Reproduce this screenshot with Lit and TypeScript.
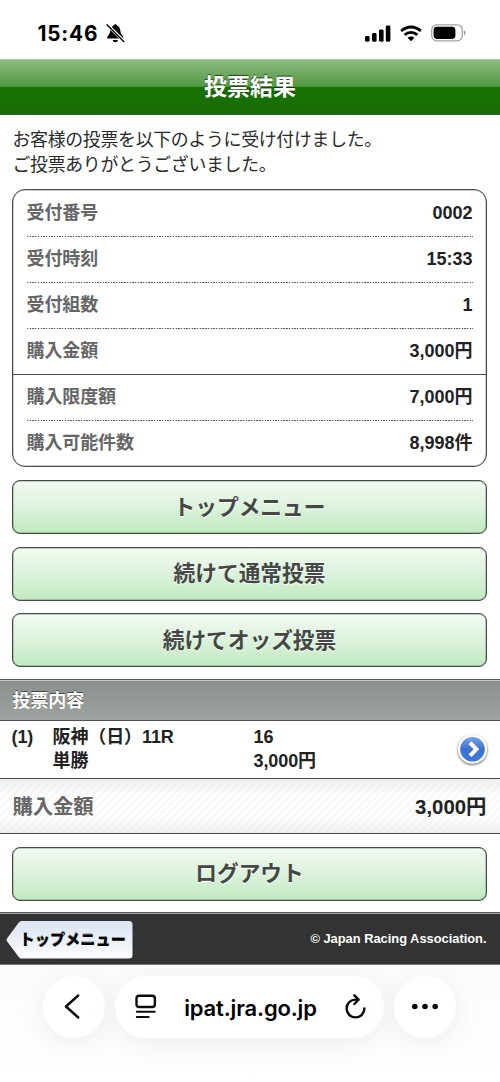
import { LitElement, html, css } from "lit";
import { customElement, property } from "lit/decorators.js";

const textFont = css`"Liberation Sans", "Noto Sans CJK JP", sans-serif`;

@customElement("status-bar")
class StatusBar extends LitElement {
  static styles = css`
    :host { display: flex; height: 59px; box-sizing: border-box; padding: 7px 34px 0 37.5px; align-items: center; background: #fff; color: #000; }
    .time { font: 700 20.8px/24px Inter, sans-serif; letter-spacing: 0.8px; width: 62.5px; padding-top: 1px; white-space: nowrap; }
    .bell { margin-left: 6px; }
    .signal { margin-left: auto; }
    .wifi { margin-left: 9px; }
    .battery { margin-left: 9px; }
    svg { display: block; flex: none; }
  `;
  render() {
    return html`
      <span class="time">15:46</span>
      <svg class="bell" width="19" height="20" viewBox="0 0 19 20">
        <path d="M9.3 1.2C8 1.2 7.6 2 7.4 2.8C4.8 3.7 4.3 5.8 4.2 8.3C4 11.3 2 11.9 1.2 14.2C1 15.1 1.5 15.6 2.3 15.6H16.3C17.2 15.6 17.7 15 17.3 14C16.6 12 14.7 11.3 14.4 8.2C14.3 5.8 13.7 3.7 11.2 2.8C11 2 10.6 1.2 9.3 1.2ZM6.7 17H12C11.6 18.5 10.6 19.2 9.3 19.2C8 19.2 7 18.5 6.7 17Z" fill="#000" />
        <path d="M1.2 1.6L17.9 18.2" stroke="#fff" stroke-width="3.2" />
        <path d="M1 1.8L17.7 18.4" stroke="#000" stroke-width="1.4" stroke-linecap="round" />
      </svg>
      <svg class="signal" width="26" height="17" viewBox="0 0 26 17">
        <rect x="0" y="11" width="4.6" height="5.7" rx="1.4" />
        <rect x="7" y="8.1" width="4.6" height="8.6" rx="1.4" />
        <rect x="14" y="4.6" width="4.6" height="12.1" rx="1.4" />
        <rect x="20.8" y="0.6" width="4.6" height="16.1" rx="1.4" />
      </svg>
      <svg class="wifi" width="22" height="17" viewBox="0 0 22 17" fill="none" stroke="#000" stroke-width="2.8">
        <path d="M1.2 6.1C6.7.6 15.3.6 20.8 6.1" />
        <path d="M4.7 9.9C8.3 6.6 13.7 6.6 17.3 9.9" />
        <path d="M7.6 12.8C9.5 11.1 12.5 11.1 14.4 12.8L11 16.3Z" fill="#000" stroke="none" />
      </svg>
      <svg class="battery" width="35" height="18" viewBox="0 0 35 18">
        <rect x=".7" y=".8" width="30.6" height="16" rx="5" fill="none" stroke="#a3a3a3" stroke-width="1.3" />
        <rect x="2.6" y="2.7" width="21.8" height="12.2" rx="3.3" />
        <path d="M32.8 6.2C35.4 7.2 35.4 10.4 32.8 11.4Z" fill="#a3a3a3" />
      </svg>
    `;
  }
}

@customElement("menu-button")
class MenuButton extends LitElement {
  @property() label = "";
  static styles = css`
    :host { display: block; }
    .button {
      display: flex; width: 100%; height: 54px; box-sizing: border-box; padding: 1px 0 0;
      align-items: center; justify-content: center;
      border: 1px solid #454b47; border-radius: 8px;
      background: linear-gradient(#f3faf2, #dff3df 45%, #c0eabf);
      box-shadow: inset 0 0 0 .5px rgba(70, 78, 72, .55);
      color: #444844; font: 700 21.7px/32px ${textFont}; text-shadow: 0 1px 0 #fff;
    }
  `;
  render() {
    return html`<button class="button">${this.label}</button>`;
  }
}

@customElement("browser-bar")
class BrowserBar extends LitElement {
  static styles = css`
    :host {
      display: flex; height: 117px; box-sizing: border-box; padding: 11px 43px 0; gap: 10px;
      align-items: flex-start; background: linear-gradient(#fbfbfb, #fff); overflow: hidden;
    }
    .round, .address {
      display: flex; height: 62px; box-sizing: border-box; border-radius: 31px; align-items: center; justify-content: center;
      padding-top: 1px; background: #fff; box-shadow: 0 6px 30px rgba(0, 0, 0, .065);
    }
    .round { width: 62px; flex: none; }
    .address { width: 269px; padding: 1px 17px 0 20px; justify-content: space-between; flex: none; }
    .host { font: 600 22px/28px Inter, sans-serif; color: #000; letter-spacing: -.15px; padding-top: 1px; white-space: nowrap; }
    svg { display: block; fill: none; stroke: #0b0b0b; stroke-linecap: round; stroke-linejoin: round; stroke-width: 2.4; }
    .back { margin-right: 4px; }
    .dots { fill: #0b0b0b; stroke: none; }
  `;
  render() {
    return html`
      <div class="round">
        <svg class="back" width="16" height="26" viewBox="0 0 16 26"><path d="M14.2 1.5L2 12.5L14.2 23.5" /></svg>
      </div>
      <div class="address">
        <svg width="22" height="26" viewBox="0 0 22 26">
          <rect x="1.5" y="1.7" width="18.4" height="11.3" rx="2.8" />
          <path d="M1.8 17.8H19.7M1.8 23.1H13.7" stroke-width="2" />
        </svg>
        <span class="host">ipat.jra.go.jp</span>
        <svg width="23" height="27" viewBox="0 0 23 27">
          <path d="M13.4 5.6H11.5A8.9 8.9 0 1 0 20.4 14.5M10.4 1.4L14.6 5.7L10.4 10" />
        </svg>
      </div>
      <div class="round">
        <svg class="dots" width="28" height="8" viewBox="0 0 28 8">
          <circle cx="3.8" cy="3.5" r="2.8" /><circle cx="14" cy="3.5" r="2.8" /><circle cx="24.2" cy="3.5" r="2.8" />
        </svg>
      </div>
    `;
  }
}

interface Row { label: string; value: string; line: string; }

const rows: Row[] = [
  { label: "受付番号", value: "0002", line: "dotted" },
  { label: "受付時刻", value: "15:33", line: "dotted" },
  { label: "受付組数", value: "1", line: "dotted" },
  { label: "購入金額", value: "3,000円", line: "solid" },
  { label: "購入限度額", value: "7,000円", line: "dotted" },
  { label: "購入可能件数", value: "8,998件", line: "last" },
];

@customElement("app-root")
class AppRoot extends LitElement {
  static styles = css`
    :host { display: block; width: 500px; height: 1082px; overflow: hidden; background: #fff; color: #222; font-family: ${textFont}; }
    .title {
      display: flex; height: 56px; box-sizing: border-box; padding-bottom: 1px;
      align-items: center; justify-content: center; margin: 0;
      border-top: 1px solid #a5c99d; border-bottom: 1px solid #3b5e38;
      background: linear-gradient(#8dbd83, #4f963f 50%, #187200 50%, #186d07);
      color: #fff; font-size: 23px; line-height: 34px; font-weight: 700; text-shadow: 0 -1px 1px rgba(0, 0, 0, .6);
    }
    .message { height: 50px; margin: 0; padding: 13px 12px 0 12.5px; font-size: 17.9px; line-height: 24.5px; letter-spacing: -.3px; color: #2a2a2a; }
    .card { height: 278px; box-sizing: border-box; margin: 11px 13px 0 12px; padding-top: 1px; border: 1px solid #484848; border-radius: 13px; background: #fff; box-shadow: inset 0 0 0 .5px rgba(80, 80, 80, .55); }
    .row {
      display: flex; height: 46px; box-sizing: border-box; margin: 0 13.5px; padding-bottom: 1px; align-items: center; justify-content: space-between;
      font-size: 18px; line-height: 27px; font-weight: 700;
    }
    .dotted { background: repeating-linear-gradient(90deg, #5c5c5c 0 1.35px, #d9d9d9 1.35px 2.7px) bottom / 100% 1px no-repeat; }
    .solid { margin: 0; padding: 0 13.5px; border-bottom: 1px solid #484848; }
    .last { height: 45px; padding-bottom: 0; }
    .label { color: #666; letter-spacing: -.1px; }
    .value { color: #222; }
    .buttons { display: grid; gap: 12.7px; padding: 13px 13px 0 12px; }
    .section {
      height: 42px; box-sizing: border-box; margin: 11.6px 0 0; padding: 8px 12.5px 0;
      border-top: 1px solid #565656; border-bottom: 1px solid #505050; box-shadow: inset 0 1px 0 #c6cbc8;
      background: linear-gradient(#89918d, #9da39f); color: #fff; font-size: 18px; line-height: 26px; font-weight: 700; letter-spacing: -.1px;
      text-shadow: 0 -1px 0 rgba(0, 0, 0, .5);
    }
    .bet {
      display: grid; grid-template-columns: 41px 201px 1fr 36px; height: 58px; box-sizing: border-box; padding: 4px 9px 0 11.5px;
      border-bottom: 1px solid #484848; font-size: 18px; line-height: 24.5px; font-weight: 700; letter-spacing: -.1px; color: #222;
    }
    .line { display: block; white-space: nowrap; }
    .arrow { display: block; margin-top: 5px; }
    .total {
      display: flex; height: 55px; box-sizing: border-box; padding: 2px 13.5px 0 12.5px; align-items: center; justify-content: space-between;
      border-bottom: 1px solid #484848;
      background: linear-gradient(rgba(228,228,228,.6), transparent 28% 72%, rgba(228,228,228,.6)),
        repeating-linear-gradient(135deg, #fefefe 0 2.8px, #f8f8f8 2.8px 5.6px);
      font-size: 20.4px; line-height: 30px; font-weight: 700;
    }
    .logout { padding: 13px 13px 11px 12px; }
    .footer {
      display: flex; height: 53px; box-sizing: border-box; padding: 2px 13.5px 0 6px; align-items: center; justify-content: space-between;
      border-top: 1px solid #53575a; border-bottom: 1px solid #777; box-shadow: inset 0 1px 0 #a0a4a7; background: #333;
    }
    .tag { display: grid; width: 127px; height: 38px; margin-top: 1px; }
    .tag-shape, .tag-text { grid-area: 1 / 1; }
    .tag-text { padding-left: 13.5px; font: 900 15.2px/38px ${textFont}; color: #000; white-space: nowrap; text-shadow: 0 -1px 0 #8a929a; }
    .copyright { color: #fff; font-size: 12.9px; line-height: 18px; font-weight: 700; letter-spacing: -.02px; }
  `;
  render() {
    return html`
      <status-bar></status-bar>
      <h1 class="title">投票結果</h1>
      <p class="message">お客様の投票を以下のように受け付けました。<br />ご投票ありがとうございました。</p>
      <div class="card">
        ${rows.map((r) => html`<div class="row ${r.line}"><span class="label">${r.label}</span><span class="value">${r.value}</span></div>`)}
      </div>
      <div class="buttons">
        <menu-button label="トップメニュー"></menu-button>
        <menu-button label="続けて通常投票"></menu-button>
        <menu-button label="続けてオッズ投票"></menu-button>
      </div>
      <div class="section">投票内容</div>
      <div class="bet">
        <span>(1)</span>
        <span><span class="line">阪神（日）11R</span><span class="line">単勝</span></span>
        <span><span class="line">16</span><span class="line">3,000円</span></span>
        <svg class="arrow" width="36" height="38" viewBox="0 0 36 38">
          <defs>
            <linearGradient id="blue" x2="0" y2="1"><stop stop-color="#7ba4e4" /><stop offset=".5" stop-color="#3b71d1" /><stop offset="1" stop-color="#3f79e0" /></linearGradient>
            <filter id="soft" x="-20%" y="-20%" width="140%" height="140%"><feGaussianBlur stdDeviation="1" /></filter>
          </defs>
          <circle cx="17.5" cy="20.3" r="14.8" fill="#777" filter="url(#soft)" />
          <circle cx="17.5" cy="19.2" r="14.6" fill="#fff" />
          <circle cx="17.5" cy="19.2" r="12.3" fill="url(#blue)" />
          <path d="M15 12.8L21.5 19.2L15 25.6" fill="none" stroke="#fff" stroke-width="4" />
        </svg>
      </div>
      <div class="total"><span class="label">購入金額</span><span class="value">3,000円</span></div>
      <div class="logout"><menu-button label="ログアウト"></menu-button></div>
      <div class="footer">
        <div class="tag">
          <svg class="tag-shape" width="127" height="38" viewBox="0 0 127 38">
            <defs><linearGradient id="pale" x2="0" y2="1"><stop stop-color="#dbe4f1" /><stop offset="1" stop-color="#fbfcfe" /></linearGradient></defs>
            <path d="M15.5 0H123Q126.5 0 126.5 3.5V34Q126.5 37.5 123 37.5H15.5Q13.8 37.5 12.8 36L1 20.2Q0 18.8 1 17.4L12.8 1.5Q13.8 0 15.5 0Z" fill="url(#pale)" />
          </svg>
          <span class="tag-text">トップメニュー</span>
        </div>
        <span class="copyright">© Japan Racing Association.</span>
      </div>
      <browser-bar></browser-bar>
    `;
  }
}
